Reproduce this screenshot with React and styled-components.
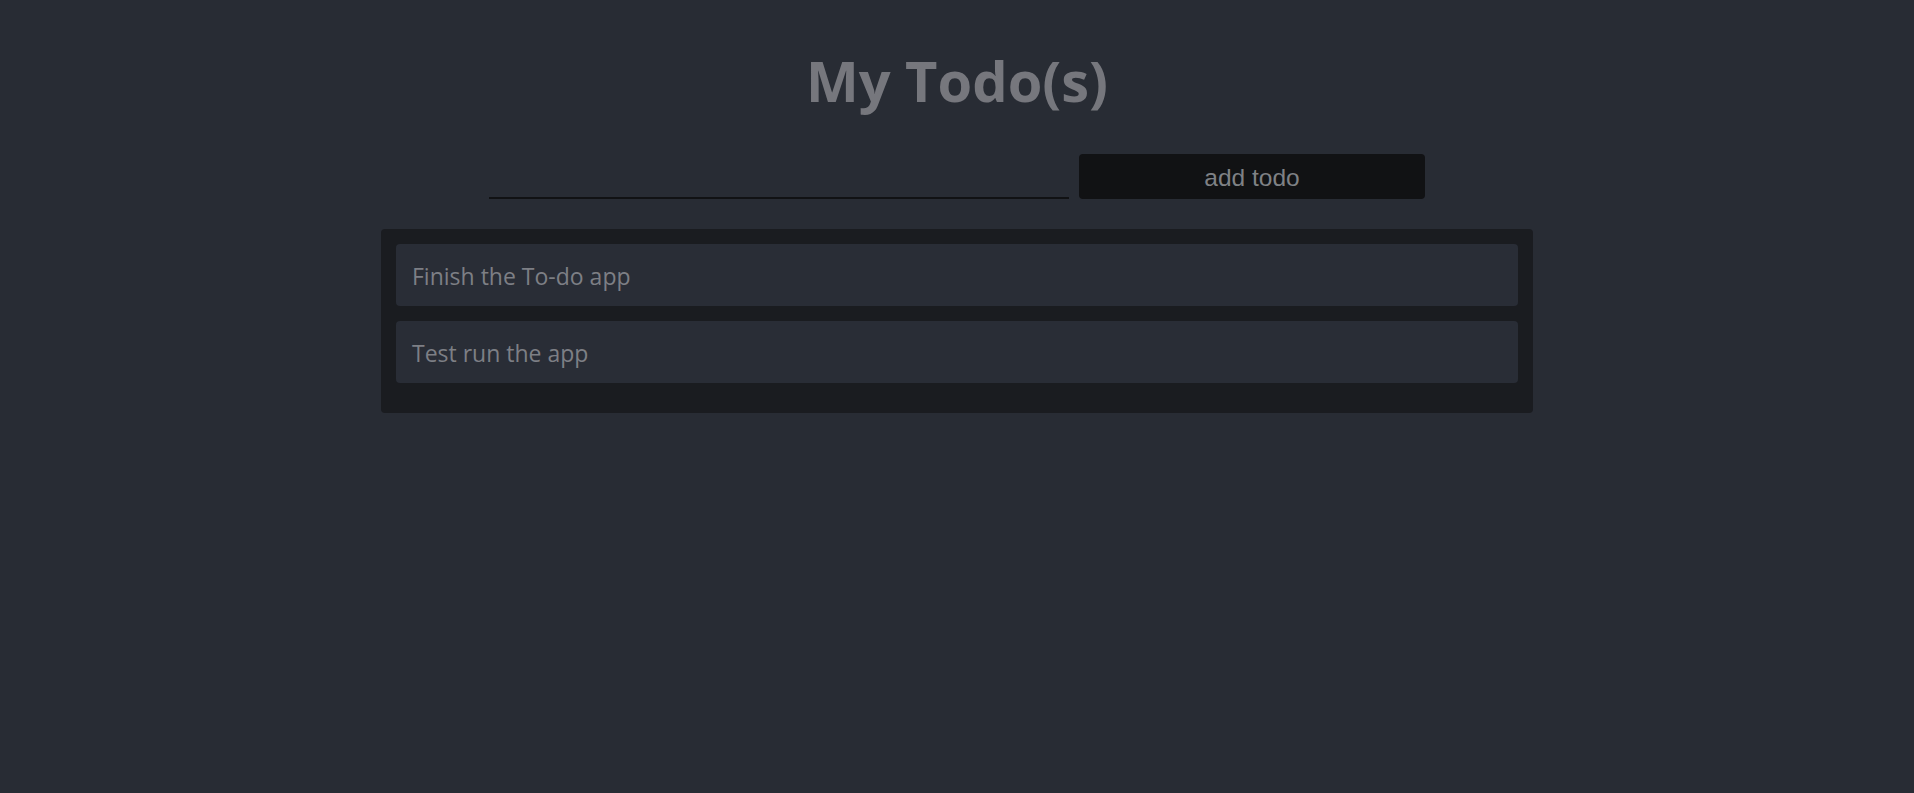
import React, { useState } from "react";
import styled, { createGlobalStyle } from "styled-components";

const GlobalStyle = createGlobalStyle`
    html, body {
        margin: 0;
        padding: 0;
        background: #282c34;
    }

    body {
        font-family: "Open Sans", "Noto Sans", sans-serif;
        min-height: 100vh;
    }
`;

export default function App() {
    const [text, setText] = useState("");
    const [todos, setTodos] = useState([
        "Finish the To-do app",
        "Test run the app",
    ]);

    const addTodo = (e) => {
        e.preventDefault();
        if (!text.trim()) return;
        setTodos([...todos, text.trim()]);
        setText("");
    };

    return (
        <Page>
            <GlobalStyle />
            <Title>My Todo(s)</Title>
            <Form onSubmit={addTodo}>
                <Input value={text} onChange={(e) => setText(e.target.value)} />
                <AddButton type="submit">add todo</AddButton>
            </Form>
            <List>
                {todos.map((todo) => (
                    <Item key={todo}>{todo}</Item>
                ))}
            </List>
        </Page>
    );
}

const Page = styled.div`
    display: flex;
    flex-direction: column;
    align-items: center;
    padding-top: 45px;
`;

const Title = styled.h1`
    margin: 0;
    color: #76777d;
    font-size: 56px;
    font-weight: 700;
    line-height: 71px;
`;

const Form = styled.form`
    display: flex;
    align-items: flex-end;
    gap: 10px;
    margin-top: 38px;
`;

const Input = styled.input`
    width: 580px;
    height: 40px;
    box-sizing: border-box;
    background: transparent;
    border: none;
    border-bottom: 2px solid #111214;
    color: #7d7f85;
    font-family: "Open Sans", sans-serif;
    font-size: 20px;
    outline: none;
`;

const AddButton = styled.button`
    width: 346px;
    height: 45px;
    padding: 2px 0 0 0;
    background: #111214;
    border: none;
    border-radius: 4px;
    color: #7f8185;
    font-family: "Liberation Sans", Arial, sans-serif;
    font-size: 24.5px;
    cursor: pointer;
`;

const List = styled.ul`
    list-style: none;
    margin: 30px 0 0 0;
    padding: 15px 15px 15px 15px;
    width: 1152px;
    box-sizing: border-box;
    background: #1a1c20;
    border-radius: 4px;
`;

const Item = styled.li`
    display: flex;
    align-items: center;
    height: 62px;
    margin-bottom: 15px;
    padding: 2px 16px 0 16px;
    box-sizing: border-box;
    background: #292d36;
    border-radius: 4px;
    color: #7d7f85;
    font-size: 23px;
`;
